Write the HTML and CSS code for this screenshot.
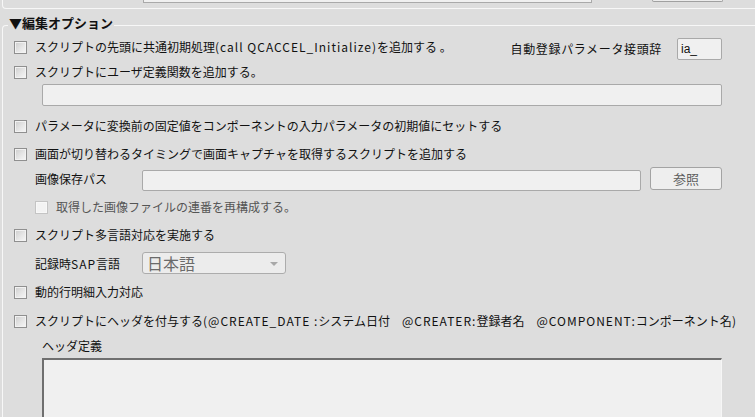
FILE: index.html
```html
<!DOCTYPE html>
<html lang="ja">
<head>
<meta charset="utf-8">
<title>編集オプション</title>
<link rel="stylesheet" href="styles.css">
</head>
<body>
<div class="page">
  <div class="prev">
    <div class="prev-field"></div>
    <div class="prev-btn"></div>
  </div>
  <div class="group">
    <div class="legend">▼編集オプション</div>
    <div class="body">
      <div class="row r1">
        <label class="chk"><span class="box"></span><span class="txt">スクリプトの先頭に共通初期処理<span class="lat">(call QCACCEL_Initialize)</span>を追加する <span class="dot">。</span></span></label>
        <div class="prefix">
          <span class="prefix-label">自動登録パラメータ接頭辞</span>
          <div class="field prefix-field">ia_</div>
        </div>
      </div>
      <div class="row r2">
        <label class="chk"><span class="box"></span><span class="txt">スクリプトにユーザ定義関数を追加する。</span></label>
      </div>
      <div class="field wide func-field"></div>
      <div class="row r3">
        <label class="chk"><span class="box"></span><span class="txt">パラメータに変換前の固定値をコンポーネントの入力パラメータの初期値にセットする</span></label>
      </div>
      <div class="row r4">
        <label class="chk"><span class="box"></span><span class="txt">画面が切り替わるタイミングで画面キャプチャを取得するスクリプトを追加する</span></label>
      </div>
      <div class="sub path-row">
        <span class="sub-label">画像保存パス</span>
        <div class="field path-field"></div>
        <div class="btn">参照</div>
      </div>
      <div class="row sub-chk">
        <label class="chk disabled"><span class="box"></span><span class="txt">取得した画像ファイルの連番を再構成する。</span></label>
      </div>
      <div class="row r5">
        <label class="chk"><span class="box"></span><span class="txt">スクリプト多言語対応を実施する</span></label>
      </div>
      <div class="sub lang-row">
        <span class="sub-label">記録時<span class="lat">SAP</span>言語</span>
        <div class="select"><span class="select-val">日本語</span><span class="arrow"></span></div>
      </div>
      <div class="row r6">
        <label class="chk"><span class="box"></span><span class="txt">動的行明細入力対応</span></label>
      </div>
      <div class="row r7">
        <label class="chk"><span class="box"></span><span class="txt">スクリプトにヘッダを付与する<span class="lat">(@CREATE_DATE :</span>システム日付<span class="lat gap">@CREATER:</span>登録者名<span class="lat gap">@COMPONENT:</span>コンポーネント名<span class="lat">)</span></span></label>
      </div>
      <div class="head-label">ヘッダ定義</div>
      <div class="textarea"></div>
    </div>
  </div>
</div>
</body>
</html>
```
FILE: styles.css
```css
html, body {
  margin: 0;
  padding: 0;
  background: #dddddd;
  overflow: hidden;
}
body {
  width: 755px;
  height: 417px;
  font-family: "Noto Sans CJK JP", "Noto Sans", sans-serif;
  font-size: 12px;
  color: #111;
}
.page {
  width: 755px;
  height: 417px;
  overflow: hidden;
}
.prev {
  height: 9px;
  box-sizing: border-box;
  margin-left: 2px;
  width: 900px;
  border-left: 1px solid #f7f7f7;
  border-bottom: 1px solid #f7f7f7;
  border-bottom-left-radius: 4px;
  display: flex;
  align-items: flex-start;
}
.prev-field {
  margin-left: 140px;
  width: 447px;
  height: 2px;
  background: #f0f0f0;
  border: 1px solid #a9a9a9;
  border-top: none;
}
.prev-btn {
  margin-left: 60px;
  width: 69px;
  height: 1px;
  border: 1px solid #a0a0a0;
  border-top: none;
  border-radius: 0 0 3px 3px;
  background: #ececec;
}
.group {
  margin-top: 16px;
  margin-left: 2px;
  width: 900px;
  height: 420px;
  border-top: 1px solid #f7f7f7;
  border-left: 1px solid #f7f7f7;
  border-top-left-radius: 4px;
}
.legend {
  margin-top: -11px;
  margin-left: 5px;
  padding: 0 1px;
  width: fit-content;
  background: #dddddd;
  font-size: 13px;
  font-weight: bold;
  line-height: 16px;
  height: 16px;
  color: #111;
}
.body {
  width: 719px;
  box-sizing: border-box;
  padding-left: 11px;
  display: flex;
  flex-direction: column;
}
.row {
  display: flex;
  align-items: flex-start;
  white-space: nowrap;
}
.chk {
  display: flex;
  align-items: center;
  height: 16px;
  line-height: 16px;
}
.box {
  flex: none;
  width: 13px;
  height: 13px;
  box-sizing: border-box;
  border: 1px solid #8f8f8f;
  background: linear-gradient(135deg, #cdcdcd 0%, #e6e6e6 55%, #f7f7f7 100%);
  box-shadow: inset 0 0 0 1px #f2f2f2;
  margin-right: 8px;
}
.chk.disabled .box {
  border-color: #c4c4c4;
  background: #f3f3f3;
  box-shadow: inset 0 0 0 1px #f8f8f8;
}
.chk.disabled .txt {
  color: #555;
}
.lat {
  letter-spacing: 1px;
}
.lat.gap {
  margin-left: 12px;
}
.r1 {
  margin-top: 8px;
  height: 22px;
  justify-content: space-between;
}
.prefix {
  display: flex;
  align-items: center;
  margin-top: -1px;
  height: 22px;
}
.prefix-label {
  line-height: 22px;
  margin-right: 15px;
  letter-spacing: 0.65px;
}
.field {
  box-sizing: border-box;
  background: #f0f0f0;
  border: 1px solid #a9a9a9;
  border-radius: 2px;
}
.prefix-field {
  width: 45px;
  height: 22px;
  line-height: 20px;
  padding-left: 3px;
  font-family: "Liberation Sans", sans-serif;
  font-size: 12px;
  color: #111;
}
.r2 { margin-top: 3px; }
.func-field {
  margin-top: 4px;
  margin-left: 28px;
  height: 22px;
}
.r3 { margin-top: 12px; }
.r4 { margin-top: 12px; }
.sub {
  display: flex;
  margin-left: 21px;
  white-space: nowrap;
}
.sub-label {
  width: 107px;
  flex: none;
}
.path-row {
  margin-top: 5px;
  height: 24px;
  align-items: flex-start;
  gap: 9px;
}
.path-row .sub-label {
  width: 98px;
  margin-top: 4px;
  line-height: 16px;
}
.path-field {
  flex: 1;
  margin-top: 3px;
  height: 21px;
}
.btn {
  flex: none;
  width: 72px;
  height: 23px;
  box-sizing: border-box;
  border: 1px solid #a3a3a3;
  border-radius: 3px;
  background: #eeeeee;
  color: #5e5e5e;
  font-size: 13px;
  line-height: 21px;
  text-align: center;
}
.sub-chk {
  margin-top: 8px;
  margin-left: 21px;
}
.r5 { margin-top: 12px; }
.lang-row {
  margin-top: 9px;
  height: 22px;
  align-items: center;
}
.select {
  width: 144px;
  height: 22px;
  box-sizing: border-box;
  border: 1px solid #acacac;
  border-radius: 3px;
  background: #ececec;
  display: flex;
  align-items: center;
  justify-content: space-between;
  padding: 0 7px 0 4px;
}
.select-val {
  font-size: 16px;
  line-height: 20px;
  color: #6a6a6a;
}
.arrow {
  width: 0;
  height: 0;
  border-left: 4px solid transparent;
  border-right: 4px solid transparent;
  border-top: 4px solid #a8a8a8;
  margin-top: 2px;
}
.r6 { margin-top: 10px; }
.r7 { margin-top: 13px; }
.head-label {
  margin-top: 9px;
  margin-left: 28px;
  line-height: 16px;
  height: 16px;
}
.textarea {
  margin-top: 4px;
  margin-left: 28px;
  height: 80px;
  box-sizing: border-box;
  background: #f0f0f0;
  border-top: 2px solid #6f6f6f;
  border-left: 2px solid #6f6f6f;
  border-right: 1px solid #f6f6f6;
  border-bottom: 1px solid #f6f6f6;
}
```
